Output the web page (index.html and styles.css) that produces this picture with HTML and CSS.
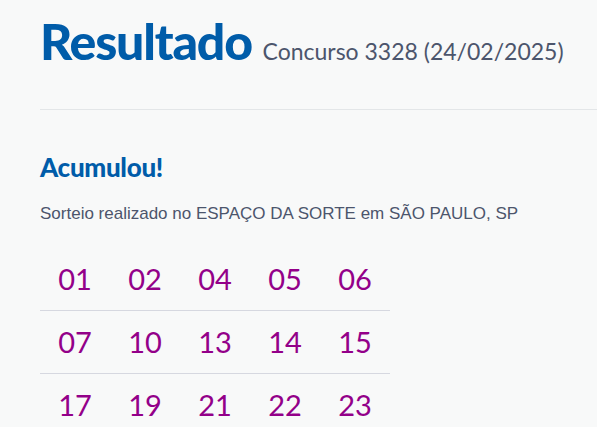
FILE: index.html
```html
<!DOCTYPE html>
<html lang="pt-BR">
<head>
    <meta charset="UTF-8">
    <title>Resultado Lotofácil</title>
<link rel="stylesheet" href="styles.css">
</head>
<body>
    <div class="page">
        <h1 class="title">Resultado <span class="contest">Concurso 3328 (24/02/2025)</span></h1>
        <hr class="divider">
        <h2 class="status">Acumulou!</h2>
        <p class="place">Sorteio realizado no ESPAÇO DA SORTE em SÃO PAULO, SP</p>
        <ul class="balls">
            <li>01</li><li>02</li><li>04</li><li>05</li><li>06</li>
            <li>07</li><li>10</li><li>13</li><li>14</li><li>15</li>
            <li>17</li><li>19</li><li>21</li><li>22</li><li>23</li>
        </ul>
    </div>
</body>
</html>
```

FILE: styles.css
```css
html, body {
    margin: 0;
    padding: 0;
    background: #f8f9f9;
}
.page {
    padding: 11px 0 0 40px;
    font-family: "Liberation Sans", Arial, sans-serif;
    color: #4c556c;
}
.title {
    margin: 0;
    font-family: Lato, sans-serif;
    font-weight: 900;
    font-size: 50px;
    line-height: 60px;
    color: #005ca9;
    letter-spacing: -1.2px;
}
.contest {
    font-family: Lato, sans-serif;
    font-weight: 400;
    font-size: 23px;
    letter-spacing: 0;
    color: #4c556c;
}
.divider {
    border: 0;
    border-top: 1px solid #e3e6e8;
    margin: 28px 0 0 0;
}
.status {
    margin: 42px 0 0 0;
    font-family: Lato, sans-serif;
    font-weight: 900;
    font-size: 26px;
    line-height: 30px;
    color: #005ca9;
    letter-spacing: -0.3px;
}
.place {
    margin: 22px 0 0 0;
    font-size: 17px;
    line-height: 20px;
}
.balls {
    list-style: none;
    margin: 24px 0 0 0;
    padding: 0;
    width: 350px;
    display: grid;
    grid-template-columns: repeat(5, 70px);
}
.balls li {
    text-align: center;
    font-family: Lato, sans-serif;
    font-weight: 400;
    font-size: 29px;
    line-height: 62px;
    color: #930089;
    border-bottom: 1px solid #d6d8e0;
}
.balls li:nth-last-child(-n+5) {
    border-bottom: 0;
}
```
